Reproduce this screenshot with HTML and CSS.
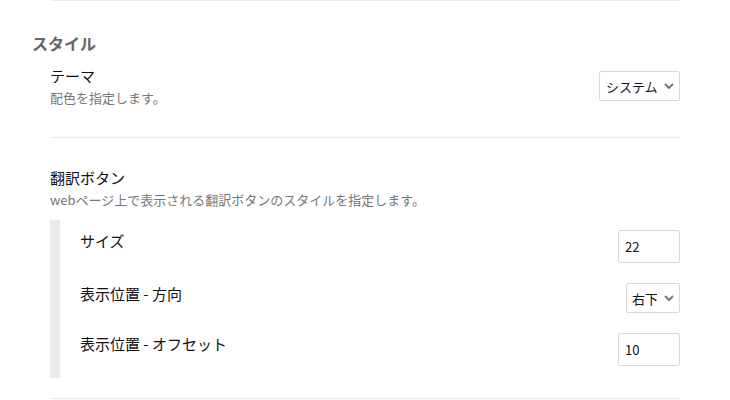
FILE: index.html
```html
<!DOCTYPE html>
<html lang="ja">
<head>
<meta charset="utf-8">
<link rel="stylesheet" href="styles.css">
</head>
<body>
<div class="page">
  <div class="divider"></div>
  <h2 class="section-title">スタイル</h2>
  <div class="options">
    <div class="option">
      <div class="option-row">
        <div class="option-text">
          <div class="option-label">テーマ</div>
          <div class="option-desc">配色を指定します。</div>
        </div>
        <div class="select-wrap select-theme">
          <select class="select"><option>システム</option></select>
          <svg class="chevron" width="10" height="6" viewBox="0 0 10 6"><path d="M1 1 L5 5 L9 1" fill="none" stroke="#777" stroke-width="2"/></svg>
        </div>
      </div>
    </div>
    <div class="divider"></div>
    <div class="option option-group">
      <div class="option-label">翻訳ボタン</div>
      <div class="option-desc">webページ上で表示される翻訳ボタンのスタイルを指定します。</div>
      <div class="sub-options">
        <div class="sub-row">
          <div class="sub-label">サイズ</div>
          <input class="text-input" type="text" value="22">
        </div>
        <div class="sub-row">
          <div class="sub-label">表示位置 - 方向</div>
          <div class="select-wrap select-pos">
            <select class="select"><option>右下</option></select>
            <svg class="chevron" width="10" height="6" viewBox="0 0 10 6"><path d="M1 1 L5 5 L9 1" fill="none" stroke="#777" stroke-width="2"/></svg>
          </div>
        </div>
        <div class="sub-row">
          <div class="sub-label">表示位置 - オフセット</div>
          <input class="text-input" type="text" value="10">
        </div>
      </div>
    </div>
    <div class="divider"></div>
  </div>
</div>
</body>
</html>
```

FILE: styles.css
```css
* { box-sizing: border-box; }
body {
  margin: 0;
  background: #fff;
  font-family: "Noto Sans CJK JP", "Noto Sans", sans-serif;
  color: #111;
}
.page {
  width: 680px;
  padding-left: 32px;
}
.divider {
  height: 1px;
  background: #ebebeb;
  margin-left: 18px;
}
.options > .divider { margin-left: 0; }
.section-title {
  margin: 32px 0 13px 0;
  font-size: 16px;
  line-height: 20px;
  font-weight: bold;
  color: #666;
}
.options {
  padding-left: 18px;
}
.option {
  padding-bottom: 30px;
}
.option-row {
  display: flex;
  justify-content: space-between;
  align-items: flex-start;
}
.option-label {
  font-size: 15px;
  line-height: 20px;
  color: #111;
}
.option-desc {
  margin-top: 3px;
  font-size: 13px;
  line-height: 18px;
  color: #777;
}
.select-wrap {
  position: relative;
  margin-top: 5px;
}
.select {
  -webkit-appearance: none;
  appearance: none;
  display: block;
  height: 30px;
  border: 1px solid #d9d9d9;
  border-radius: 2px;
  background: #fff;
  font-family: inherit;
  font-size: 13px;
  color: #111;
  padding: 0 22px 0 6px;
}
.select-theme .select { width: 81px; }
.select-pos .select { width: 54px; padding-left: 5px; }
.chevron {
  position: absolute;
  right: 6px;
  top: 12px;
  pointer-events: none;
}
.option-group {
  padding-top: 30px;
  padding-bottom: 20px;
}
.sub-options {
  margin-top: 11px;
  border-left: 10px solid #ebebed;
  padding: 10px 0 12px 20px;
  display: flex;
  flex-direction: column;
  gap: 20px;
}
.sub-row {
  display: flex;
  justify-content: space-between;
  align-items: flex-start;
}
.sub-label {
  margin-top: 1px;
  font-size: 15px;
  line-height: 20px;
}
.sub-row .select-wrap { margin-top: 0; }
.text-input {
  width: 62px;
  height: 33px;
  border: 1px solid #d9d9d9;
  border-radius: 2px;
  padding: 0 6px;
  font-family: inherit;
  font-size: 13px;
  color: #111;
  outline: none;
}
```
